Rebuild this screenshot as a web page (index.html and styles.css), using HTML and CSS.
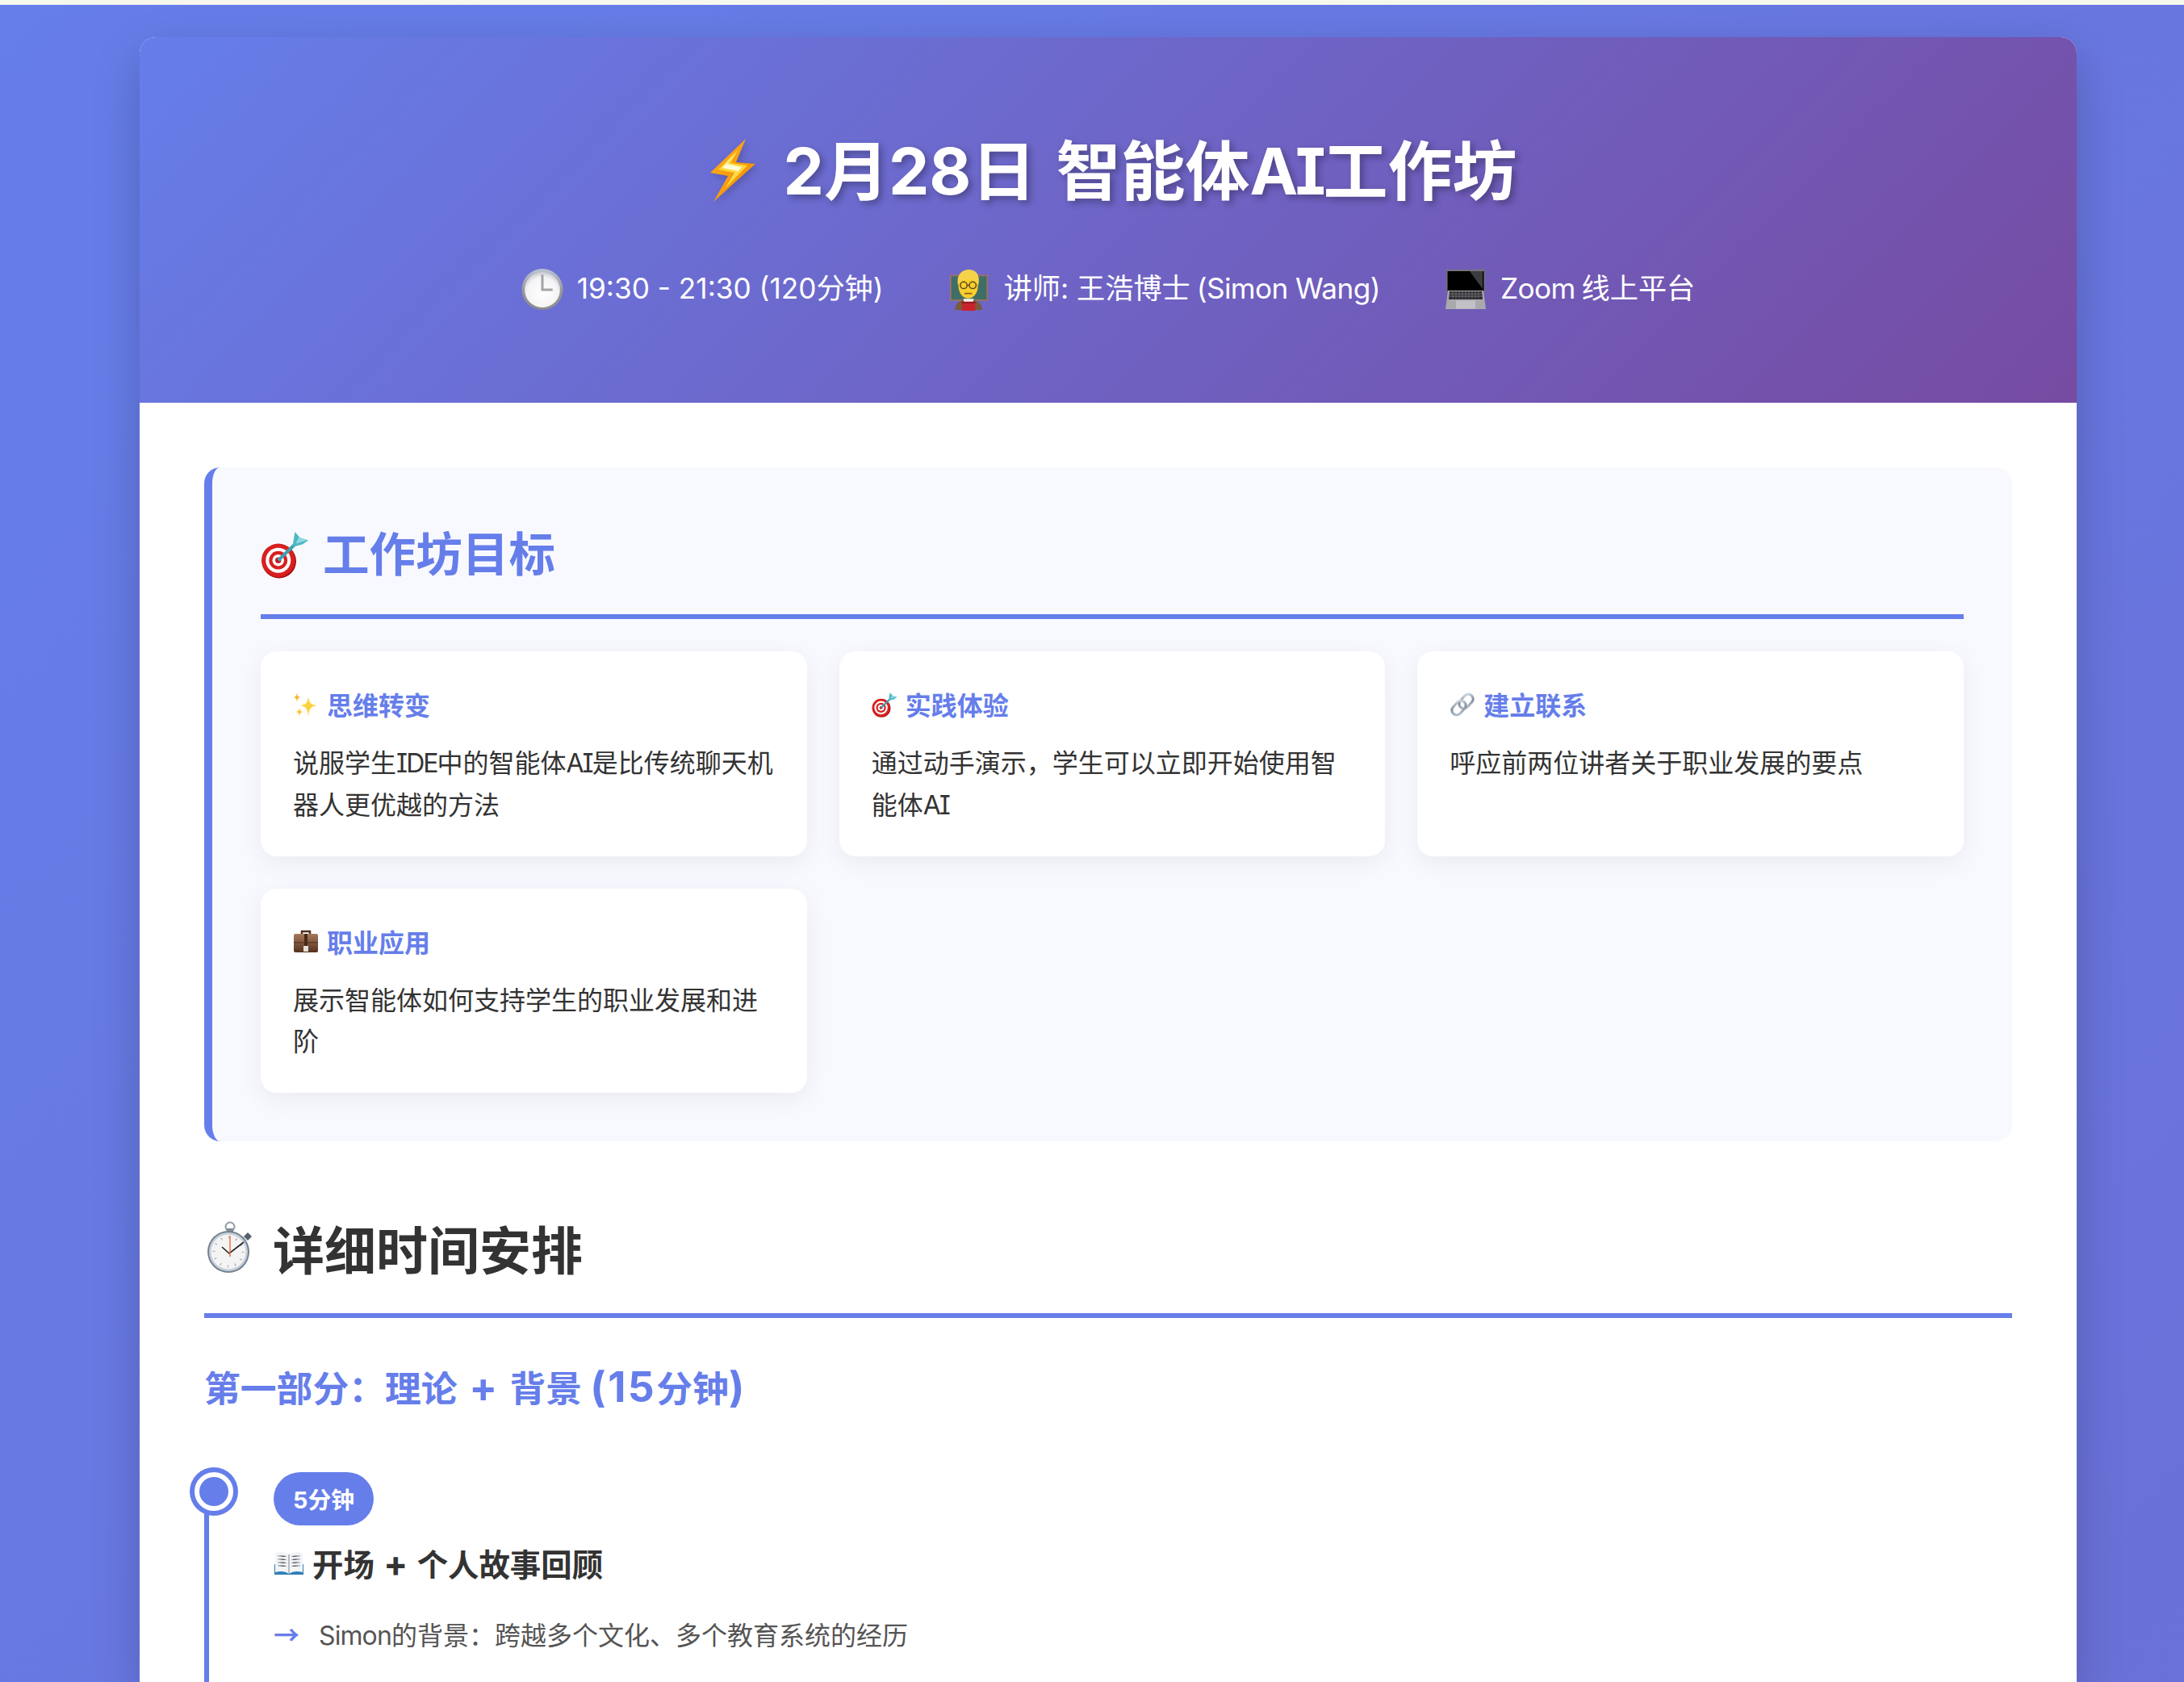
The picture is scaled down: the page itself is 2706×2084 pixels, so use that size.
FILE: index.html
```html
<!DOCTYPE html>
<html lang="zh-CN">
<head>
  <meta charset="UTF-8">
  <meta name="viewport" content="width=device-width, initial-scale=1.0">
  <title>2月28日 智能体AI工作坊</title>
  <link rel="stylesheet" href="styles.css">
</head>
<body>
  <svg class="icon-defs" aria-hidden="true">
    <defs>
      <linearGradient id="boltEdge" x1="0" y1="0" x2="1" y2="1">
        <stop offset="0" stop-color="#ffb020"/>
        <stop offset="1" stop-color="#f08a00"/>
      </linearGradient>
      <radialGradient id="clockFace" cx="0.5" cy="0.6" r="0.6">
        <stop offset="0" stop-color="#ffffff"/>
        <stop offset="0.75" stop-color="#f4f4f6"/>
        <stop offset="1" stop-color="#c9c9cf"/>
      </radialGradient>
      <linearGradient id="clockRim" x1="0" y1="0" x2="0" y2="1">
        <stop offset="0" stop-color="#b9c4d6"/>
        <stop offset="0.5" stop-color="#9a9a9e"/>
        <stop offset="1" stop-color="#8b8b8e"/>
      </linearGradient>
      <linearGradient id="caseBody" x1="0" y1="0" x2="0" y2="1">
        <stop offset="0" stop-color="#a8795a"/>
        <stop offset="1" stop-color="#55321f"/>
      </linearGradient>
      <linearGradient id="silver" x1="0" y1="0" x2="1" y2="1">
        <stop offset="0" stop-color="#dfe6ee"/>
        <stop offset="0.5" stop-color="#7e8c9c"/>
        <stop offset="1" stop-color="#c4ced8"/>
      </linearGradient>
      <symbol id="dart" viewBox="0 0 58 58">
        <circle cx="22" cy="37" r="20.5" fill="#a80f12"/>
        <circle cx="21" cy="36" r="20" fill="#d8201f"/>
        <circle cx="21" cy="36" r="15" fill="#fff"/>
        <circle cx="21" cy="36" r="11" fill="#d8201f"/>
        <circle cx="21" cy="36" r="7" fill="#fff"/>
        <circle cx="21" cy="36" r="3.5" fill="#c8181a"/>
        <path d="M21 36 L44 14" stroke="#3f9fb0" stroke-width="4"/>
        <path d="M38 20 L41 2 L47 9 L57 12 L50 17 Z" fill="#4fb6c4"/>
        <path d="M42 16 L46 8 L55 12 Z" fill="#8ddbe2"/>
      </symbol>
      <symbol id="sparkles" viewBox="0 0 32 32">
        <path d="M19 6 C20 14 22 16 30 17 C22 18 20 21 19 31 C18 21 16 18 9 17 C16 16 18 14 19 6 Z" fill="#fdd23f"/>
        <path d="M5 1 C5.5 5 6 6 9 7 C6 8 5.5 9 5 13 C4.5 9 4 8 1 7 C4 6 4.5 5 5 1 Z" fill="#f9b62c"/>
        <path d="M8 20 C8.5 23 9 24 12 25 C9 26 8.5 27 8 31 C7.5 27 7 26 4 25 C7 24 7.5 23 8 20 Z" fill="#fac53a"/>
      </symbol>
      <symbol id="link" viewBox="0 0 32 32">
        <g fill="none" stroke="url(#silver)" stroke-width="3">
          <rect x="14.5" y="2" width="12" height="20" rx="6" transform="rotate(42 20.5 12)"/>
          <rect x="5.5" y="10" width="12" height="20" rx="6" transform="rotate(42 11.5 20)"/>
        </g>
      </symbol>
      <symbol id="briefcase" viewBox="0 0 32 32">
        <path d="M11 8 V4 H21 V8" fill="none" stroke="#4d2e1c" stroke-width="2.5"/>
        <rect x="1" y="7" width="30" height="23" rx="2" fill="url(#caseBody)"/>
        <rect x="1" y="17" width="30" height="1.5" fill="#4a2a18" opacity=".6"/>
        <rect x="14" y="7" width="4" height="16" fill="#4a2a18"/>
        <rect x="13" y="22" width="6" height="7" fill="#e6e0d6"/>
      </symbol>
      <symbol id="book" viewBox="0 0 38 38">
        <path d="M1 20 H37 V33 H1 Z" fill="#2f80b8"/>
        <path d="M2 6 C9 4 15 5 19 8 C23 5 29 4 36 6 V30 C29 28 23 29 19 32 C15 29 9 28 2 30 Z" fill="#f3f4f6"/>
        <path d="M19 8 V32" stroke="#8a98a6" stroke-width="1.2"/>
        <g stroke="#a9b2bc" stroke-width="1">
          <path d="M5 10 C9 9 13 9 16 11 M5 14 C9 13 13 13 16 15 M5 18 C9 17 13 17 16 19 M5 22 C9 21 13 21 16 23"/>
          <path d="M33 10 C29 9 25 9 22 11 M33 14 C29 13 25 13 22 15 M33 18 C29 17 25 17 22 19 M33 22 C29 21 25 21 22 23"/>
        </g>
      </symbol>
    </defs>
  </svg>

  <div class="top-strip"></div>

  <div class="container">
    <header class="header">
      <h1 class="header-title">
        <svg class="bolt" viewBox="10 0 90 100">
          <polygon points="63,12 19,54 41,58 23,90 75,43 51,41" fill="url(#boltEdge)"/>
          <polygon points="54,25 29,50 49,54 37,74 65,45 44,42" fill="#ffd93b"/>
          <polygon points="50,30 34,48 53,52 45,62 58,47 40,43" fill="#fffbd6"/>
        </svg>
        <span class="header-text"><span class="lat">2</span>月<span class="lat">28</span>日 智能体<span class="lat lat-ai">AI</span>工作坊</span>
      </h1>
      <div class="header-meta">
        <div class="meta-item">
          <svg class="meta-icon" viewBox="8 8 51 51">
            <circle cx="33.5" cy="33" r="25" fill="url(#clockRim)"/>
            <circle cx="33.5" cy="33.5" r="21.5" fill="url(#clockFace)"/>
            <path d="M33.5 15 V33.5 H46" fill="none" stroke="#a4a4a8" stroke-width="3"/>
          </svg>
          <span><span class="lat">19:30 - 21:30 (120</span>分钟<span class="lat">)</span></span>
        </div>
        <div class="meta-item">
          <svg class="meta-icon" viewBox="10 7 54 56">
            <rect x="11" y="15" width="51" height="35" fill="#9a7262"/>
            <rect x="13" y="17" width="47" height="31" fill="#3f6e66"/>
            <path d="M18 62 C18 52 26 48 36 48 C46 48 54 52 54 62 Z" fill="#7a5a3c"/>
            <path d="M29 47 H43 L41 56 H31 Z" fill="#f4f4f4"/>
            <rect x="27" y="51" width="18" height="12" fill="#c8232c"/>
            <rect x="27" y="51" width="18" height="2" fill="#8e161d"/>
            <ellipse cx="35.5" cy="30" rx="13" ry="16.5" fill="#f8cf2e"/>
            <path d="M22 29 C19 13 29 8 37 8 C47 8 52 17 49 29 C47 24 44 21 37 21 C30 21 25 22 22 29 Z" fill="#f5d24a"/>
            <g fill="none" stroke="#5f4a1c" stroke-width="1.6">
              <circle cx="29.5" cy="29" r="4.5"/>
              <circle cx="41.5" cy="29" r="4.5"/>
              <path d="M34 29 H37"/>
            </g>
            <path d="M30.5 40 H40.5" stroke="#8a5a14" stroke-width="1.8"/>
          </svg>
          <span>讲师<span class="lat">: </span>王浩博士 <span class="lat lat-tight">(Simon Wang)</span></span>
        </div>
        <div class="meta-item">
          <svg class="meta-icon" viewBox="8 5 52 52">
            <rect x="10" y="6" width="48" height="28" rx="1" fill="#75757a"/>
            <rect x="11.5" y="8" width="45" height="25" fill="#000"/>
            <path d="M39 8 H55 V30 Z" fill="#3c3c40"/>
            <path d="M12 32 H56 L59 55 H9 Z" fill="#a9a9ad"/>
            <path d="M14 33 H54 L55 43 H13 Z" fill="#2c2c30"/>
            <g stroke="#8d8d92" stroke-width=".7">
              <path d="M13.5 36 H54.5 M13.3 39 H54.7"/>
              <path d="M18 33 V43 M22 33 V43 M26 33 V43 M30 33 V43 M34 33 V43 M38 33 V43 M42 33 V43 M46 33 V43 M50 33 V43" stroke-dasharray="2 1"/>
            </g>
            <rect x="22" y="44.5" width="24" height="10" fill="#c2c2c6"/>
          </svg>
          <span><span class="lat lat-tight">Zoom</span> 线上平台</span>
        </div>
      </div>
    </header>

    <main class="main">
      <section class="goals">
        <h2 class="goals-title">
          <svg class="goals-icon"><use href="#dart"/></svg>
          <span>工作坊目标</span>
        </h2>
        <div class="goal-grid">
          <div class="goal-card">
            <h4><svg class="goal-icon"><use href="#sparkles"/></svg><span>思维转变</span></h4>
            <p>说服学生<span class="lat">IDE</span>中的智能体<span class="lat">AI</span>是比传统聊天机<wbr>器人更优越的方法</p>
          </div>
          <div class="goal-card">
            <h4><svg class="goal-icon"><use href="#dart"/></svg><span>实践体验</span></h4>
            <p>通过动手演示&#xFF0C;学生可以立即开始使用智<wbr>能体<span class="lat">AI</span></p>
          </div>
          <div class="goal-card">
            <h4><svg class="goal-icon"><use href="#link"/></svg><span>建立联系</span></h4>
            <p>呼应前两位讲者关于职业发展的要点</p>
          </div>
          <div class="goal-card">
            <h4><svg class="goal-icon"><use href="#briefcase"/></svg><span>职业应用</span></h4>
            <p>展示智能体如何支持学生的职业发展和进<wbr>阶</p>
          </div>
        </div>
      </section>

      <section class="schedule">
        <h2 class="schedule-title">
          <svg class="watch" viewBox="8 5 67 67">
            <circle cx="40" cy="13" r="5.5" fill="none" stroke="#8f9aa6" stroke-width="2"/>
            <rect x="36" y="15" width="8" height="5" fill="#7f8a96"/>
            <path d="M57 25 L62 20 L67 25 L62 30 Z" fill="#56616c"/>
            <circle cx="38" cy="44" r="26" fill="#76818d"/>
            <circle cx="38" cy="44" r="24" fill="#c5d0dc"/>
            <circle cx="38" cy="44" r="21.5" fill="#f4f4f4"/>
            <circle cx="38" cy="44" r="18" fill="none" stroke="#9a9a9a" stroke-width="3" stroke-dasharray="1 8.4"/>
            <path d="M30 38 L39 46 L57 32" fill="none" stroke="#222" stroke-width="1.6"/>
            <path d="M40 24 V50" stroke="#f0743c" stroke-width="1.5"/>
          </svg>
          <span>详细时间安排</span>
        </h2>
        <h3 class="part-title">第一部分&#xFF1A;理论<span class="lat"> + </span>背景 <span class="lat lat-wide">(15</span>分钟<span class="lat">)</span></h3>
        <div class="timeline">
          <div class="timeline-item">
            <div class="timeline-dot"></div>
            <div class="duration"><span class="lat">5</span>分钟</div>
            <h4 class="item-title"><svg class="item-icon"><use href="#book"/></svg><span>开场<span class="lat"> + </span>个人故事回顾</span></h4>
            <ul class="item-list">
              <li><span class="lat lat-tight">Simon</span>的背景&#xFF1A;跨越多个文化、多个教育系统的经历</li>
            </ul>
          </div>
        </div>
      </section>
    </main>
  </div>
</body>
</html>
```

FILE: styles.css
```css
* { box-sizing: border-box; margin: 0; padding: 0; }

html, body { height: 100%; }

body {
  display: flex;
  flex-direction: column;
  overflow: hidden;
  background: linear-gradient(135deg, #667eea 0%, #764ba2 100%) 0 0 / 100% 16400px no-repeat;
  color: #333;
  font-family: "Noto Sans CJK SC", sans-serif;
  font-size: 32px;
  line-height: 1.6;
}

/* латиница внутри китайского текста */
.lat {
  font-family: Inter, sans-serif;
  font-feature-settings: "cv08";
  line-height: 1;
}

.lat-tight { letter-spacing: -0.9px; }

.icon-defs { display: block; flex: none; width: 0; height: 0; }

.top-strip { flex: none; height: 6px; background: #f6f8ee; }

.container {
  flex: 1;
  display: flex;
  flex-direction: column;
  min-height: 0;
  width: 2400px;
  margin: 40px 0 0 173px;
  background: #fff;
  border-radius: 20px 20px 0 0;
  box-shadow: 0 20px 60px rgba(0, 0, 0, 0.2);
}

/* Шапка */
.header {
  flex: none;
  height: 453px;
  padding-top: 96px;
  background: linear-gradient(135deg, #667eea 0%, #764ba2 100%);
  border-radius: 20px 20px 0 0;
  color: #fff;
}

.header-title {
  display: flex;
  justify-content: center;
  align-items: center;
  gap: 10px;
  padding-left: 4px;
  font-size: 80px;
  font-weight: 700;
  text-shadow: 4px 4px 8px rgba(0, 0, 0, 0.3);
}

.header-text { margin-bottom: 8px; word-spacing: 7px; }

.lat-ai { letter-spacing: -3.5px; }

.bolt { width: 90px; height: 100px; filter: drop-shadow(3px 3px 5px rgba(0, 0, 0, 0.2)); }

.header-meta {
  display: flex;
  justify-content: center;
  gap: 80px;
  margin-top: 49px;
  font-size: 35.2px;
}

.header-meta .lat-tight { letter-spacing: -0.6px; }

.meta-item { display: flex; align-items: center; gap: 17px; }

.meta-icon { width: 52px; height: 52px; flex: none; margin: 6px 0 -2px; }

/* Основная часть */
.main {
  flex: 1;
  display: flex;
  flex-direction: column;
  min-height: 0;
  padding: 80px 80px 0;
}

.goals {
  flex: none;
  margin-bottom: 80px;
  padding: 58px 60px 60px;
  background: #f8f9ff;
  border-left: 10px solid #667eea;
  border-radius: 20px;
}

.goals-title {
  display: flex;
  align-items: center;
  gap: 17px;
  margin-bottom: 40px;
  padding-bottom: 32px;
  border-bottom: 6px solid #667eea;
  color: #667eea;
  font-size: 57.6px;
  font-weight: 700;
}

.goals-icon { width: 60px; height: 60px; flex: none; margin-top: 8px; }

.goal-grid {
  display: grid;
  grid-template-columns: repeat(3, 1fr);
  gap: 40px;
}

.goal-card {
  padding: 40px;
  background: #fff;
  border-radius: 20px;
  box-shadow: 0 8px 30px rgba(0, 0, 0, 0.06);
}

.goal-card h4 {
  display: flex;
  align-items: center;
  gap: 10px;
  margin-bottom: 20px;
  color: #667eea;
  font-size: 32px;
  font-weight: 700;
}

.goal-icon { width: 32px; height: 32px; flex: none; }

.goal-card p { color: #333; font-size: 32px; }

.goal-card p .lat { letter-spacing: -2px; }

.schedule {
  flex: 1;
  display: flex;
  flex-direction: column;
  min-height: 0;
}

.schedule-title {
  display: flex;
  align-items: center;
  gap: 18px;
  margin-bottom: 49px;
  padding-bottom: 30px;
  border-bottom: 6px solid #667eea;
  color: #333;
  font-size: 64px;
  font-weight: 700;
}

.watch { width: 67px; height: 67px; flex: none; }

.part-title {
  margin-bottom: 71px;
  color: #667eea;
  font-size: 44.8px;
  font-weight: 700;
}

.part-title .lat { font-size: 1.15em; letter-spacing: 0.5px; word-spacing: 2px; }

.part-title .lat-wide { letter-spacing: 2.5px; }

.timeline {
  flex: 1;
  padding-left: 80px;
  border-left: 6px solid #667eea;
}

.timeline-item { position: relative; }

.timeline-dot {
  position: absolute;
  top: 0;
  left: -98px;
  width: 48px;
  height: 48px;
  background: #667eea;
  border: 6px solid #fff;
  border-radius: 50%;
  box-shadow: 0 0 0 6px #667eea;
}

.duration {
  width: fit-content;
  margin-bottom: 16px;
  padding: 10px 24px;
  background: #667eea;
  border-radius: 40px;
  color: #fff;
  font-size: 28.8px;
  font-weight: 700;
}

.item-title {
  display: flex;
  align-items: center;
  gap: 10px;
  margin-bottom: 31px;
  font-size: 38.4px;
  font-weight: 700;
}

.item-title .lat { font-size: 1.15em; word-spacing: 1px; }

.item-icon { width: 38px; height: 38px; flex: none; }

.item-list { list-style: none; }

.item-list li {
  position: relative;
  padding-left: 56px;
  color: #555;
  font-size: 32px;
}

.item-list li::before {
  content: "→";
  position: absolute;
  left: 0;
  color: #667eea;
  font-weight: 700;
}
```
